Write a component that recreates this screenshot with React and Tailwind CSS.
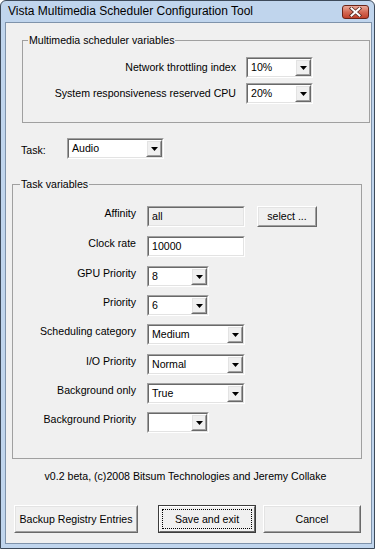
import React from "react";

const font = { fontFamily: '"Liberation Sans", Arial, sans-serif' };

function Sunken({ className = "", bg = "bg-white", children }) {
  return (
    <div className={`border border-t-[#a0a0a0] border-l-[#a0a0a0] border-r-white border-b-white ${className}`}>
      <div className={`h-full flex items-center border border-t-[#696969] border-l-[#696969] border-r-[#e3e3e3] border-b-[#e3e3e3] ${bg}`}>
        {children}
      </div>
    </div>
  );
}

function Raised({ className = "", children }) {
  return (
    <div className={`border border-t-white border-l-white border-r-[#696969] border-b-[#696969] ${className}`}>
      <div className="h-full flex items-center justify-center border border-t-[#e3e3e3] border-l-[#e3e3e3] border-r-[#a0a0a0] border-b-[#a0a0a0] bg-[#f0f0f0]">
        {children}
      </div>
    </div>
  );
}

function Combo({ value, width }) {
  return (
    <Sunken className={`h-[21px] ${width}`}>
      <span className="flex-1 pl-[3px] text-[10.6px] leading-[13px] text-black">{value}</span>
      <Raised className="h-full w-[16px]">
        <svg width="7" height="4" viewBox="0 0 7 4">
          <polygon points="0,0 7,0 3.5,4" fill="#000" />
        </svg>
      </Raised>
    </Sunken>
  );
}

function TextBox({ value, bg }) {
  return (
    <Sunken className="h-[21px] w-[98px]" bg={bg}>
      <span className="pl-[3px] text-[10.6px] leading-[13px] text-black">{value}</span>
    </Sunken>
  );
}

const taskRows = [
  { label: "Affinity", mt: "mt-[15px]", kind: "affinity" },
  { label: "Clock rate", mt: "mt-[9px]", kind: "text", value: "10000" },
  { label: "GPU Priority", mt: "mt-[9px]", kind: "combo", value: "8", width: "w-[62px]" },
  { label: "Priority", mt: "mt-[8px]", kind: "combo", value: "6", width: "w-[62px]" },
  { label: "Scheduling category", mt: "mt-[8px]", kind: "combo", value: "Medium", width: "w-[98px]" },
  { label: "I/O Priority", mt: "mt-[9px]", kind: "combo", value: "Normal", width: "w-[98px]" },
  { label: "Background only", mt: "mt-[8px]", kind: "combo", value: "True", width: "w-[98px]" },
  { label: "Background Priority", mt: "mt-[8px]", kind: "combo", value: "", width: "w-[62px]" },
];

export default function App() {
  return (
    <div
      className="w-[375px] h-[549px] flex flex-col bg-[#c0d5ed] border border-[#3d4a5a] rounded-t-[6px] text-black"
      style={font}
    >
      {/* title bar */}
      <div className="h-[21px] flex items-center justify-between pl-[7px] pr-[5px]">
        <span className="text-[12px] leading-[15px] text-black">
          Vista Multimedia Scheduler Configuration Tool
        </span>
        <div className="w-[27px] h-[14px] rounded-[3px] border border-[#6b2418] bg-gradient-to-b from-[#e9a99b] via-[#d46a55] to-[#c1402a] flex items-center justify-center">
          <svg width="13" height="10" viewBox="0 0 13 10">
            <path d="M2.5 1.5 L10.5 8.5 M10.5 1.5 L2.5 8.5" stroke="#5a2a22" strokeWidth="3.6" strokeLinecap="square" />
            <path d="M2.5 1.5 L10.5 8.5 M10.5 1.5 L2.5 8.5" stroke="#ffffff" strokeWidth="2" strokeLinecap="square" />
          </svg>
        </div>
      </div>

      {/* client area */}
      <div className="flex-1 ml-[4px] mr-[2px] mb-[4px] border border-[#7f93ab] bg-[#f0f0f0] flex flex-col text-[10.6px] leading-[13px]">
        <fieldset className="mt-[11px] ml-[16px] w-[348px] border border-[#a0a0a0] pb-[18px]">
          <legend className="ml-[5px] px-[1px]">Multimedia scheduler variables</legend>
          <div className="mt-[10px] flex items-center">
            <span className="w-[213px] text-right">Network throttling index</span>
            <div className="ml-[10px]">
              <Combo value="10%" width="w-[67px]" />
            </div>
          </div>
          <div className="mt-[5px] flex items-center">
            <span className="w-[213px] text-right">System responsiveness reserved CPU</span>
            <div className="ml-[10px]">
              <Combo value="20%" width="w-[67px]" />
            </div>
          </div>
        </fieldset>

        <div className="mt-[15px] ml-[15px] flex items-center">
          <span className="w-[46px] mt-[4px]">Task:</span>
          <Combo value="Audio" width="w-[97px]" />
        </div>

        <fieldset className="mt-[19px] ml-[6px] w-[350px] border border-[#a0a0a0] pb-[25px]">
          <legend className="ml-[7px] px-[1px]">Task variables</legend>
          {taskRows.map((row) => (
            <div key={row.label} className={`${row.mt} flex items-start`}>
              <span className="w-[123px] text-right pt-[1px]">{row.label}</span>
              <div className="ml-[11px] flex items-start">
                {row.kind === "affinity" && (
                  <>
                    <TextBox value="all" bg="bg-[#f0f0f0]" />
                    <Raised className="ml-[12px] h-[21px] w-[60px]">
                      <span>select ...</span>
                    </Raised>
                  </>
                )}
                {row.kind === "text" && <TextBox value={row.value} bg="bg-white" />}
                {row.kind === "combo" && <Combo value={row.value} width={row.width} />}
              </div>
            </div>
          ))}
        </fieldset>

        <div className="mt-[11px] pr-[6px] text-center">
          v0.2 beta, (c)2008 Bitsum Technologies and Jeremy Collake
        </div>

        <div className="mt-[22px] ml-[8px] flex items-center">
          <Raised className="h-[28px] w-[124px]">
            <span>Backup Registry Entries</span>
          </Raised>
          <div className="ml-[20px] h-[28px] w-[98px] border border-[#3c3c3c]">
            <div className="h-full border border-t-white border-l-white border-r-[#696969] border-b-[#696969] bg-[#f0f0f0] p-[2px]">
              <div className="h-full border border-dotted border-black flex items-center justify-center">
                <span>Save and exit</span>
              </div>
            </div>
          </div>
          <Raised className="ml-[7px] h-[28px] w-[98px]">
            <span>Cancel</span>
          </Raised>
        </div>
      </div>
    </div>
  );
}
